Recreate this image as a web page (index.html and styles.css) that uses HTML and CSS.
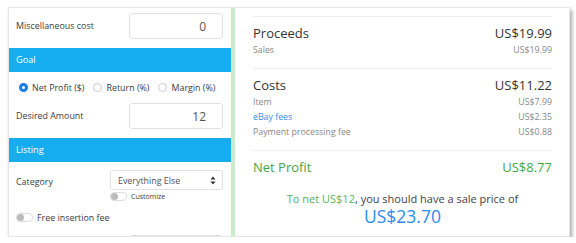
FILE: index.html
```html
<!DOCTYPE html>
<html lang="en">
<head>
    <meta charset="UTF-8">
    <meta name="viewport" content="width=device-width, initial-scale=1.0">
    <title>eBay Fee Calculator</title>
    <link rel="stylesheet" href="styles.css">
</head>
<body>
    <div class="calculator">
        <!-- inputs -->
        <div class="inputs">
            <div class="field">
                <label>Miscellaneous cost</label>
                <input class="num" type="text" value="0">
            </div>

            <div class="section-head">Goal</div>
            <div class="radios">
                <span class="radio checked"></span><span class="radio-label">Net Profit ($)</span>
                <span class="radio"></span><span class="radio-label">Return (%)</span>
                <span class="radio"></span><span class="radio-label">Margin (%)</span>
            </div>
            <div class="field">
                <label>Desired Amount</label>
                <input class="num" type="text" value="12">
            </div>

            <div class="section-head">Listing</div>
            <div class="field field-select">
                <label>Category</label>
                <div class="select-wrap">
                    <div class="select">
                        <span>Everything Else</span>
                        <svg width="6" height="9" viewBox="0 0 6 9">
                            <path d="M3 0.5 L5.5 3.5 H0.5 Z M3 8.5 L5.5 5.5 H0.5 Z" fill="#333"/>
                        </svg>
                    </div>
                    <div class="switch-row small">
                        <span class="switch"></span><span>Customize</span>
                    </div>
                </div>
            </div>
            <div class="switch-row">
                <span class="switch"></span><span>Free insertion fee</span>
            </div>
            <div class="field">
                <label></label>
                <input class="num" type="text" value="">
            </div>
        </div>

        <div class="split"></div>

        <!-- results -->
        <div class="results">
            <div class="block">
                <div class="line big"><span>Proceeds</span><span>US$19.99</span></div>
                <div class="line"><span>Sales</span><span>US$19.99</span></div>
            </div>
            <div class="block">
                <div class="line big"><span>Costs</span><span>US$11.22</span></div>
                <div class="line"><span>Item</span><span>US$7.99</span></div>
                <div class="line"><a href="#">eBay fees</a><span>US$2.35</span></div>
                <div class="line"><span>Payment processing fee</span><span>US$0.88</span></div>
            </div>
            <div class="block">
                <div class="line big profit"><span>Net Profit</span><span>US$8.77</span></div>
                <p class="target"><span class="green">To net US$12</span>, you should have a sale price of</p>
                <p class="price">US$23.70</p>
            </div>
        </div>
    </div>
</body>
</html>
```

FILE: styles.css
```css
body {
    margin: 0;
    font-family: "Open Sans", Arial, sans-serif;
    background-color: #fff;
    color: #444;
}

.calculator {
    display: grid;
    grid-template-columns: 222px 4px 1fr;
    margin: 7px 6px 0 8px;
    height: 230px;
    overflow: hidden;
    background: #fff;
    border: 1px solid #e6e6e6;
    box-shadow: 2px 3px 4px rgba(0, 0, 0, 0.35);
    box-sizing: border-box;
}

/* left column */
.inputs {
    font-size: 8.9px;
    color: #3c3c3c;
}

.field {
    display: flex;
    justify-content: space-between;
    align-items: flex-start;
    padding: 5px 8px 9px 7px;
}

.field label {
    padding-top: 6px;
}

.num {
    width: 94px;
    height: 26px;
    box-sizing: border-box;
    border: 1px solid #e2e2e2;
    border-radius: 3px;
    padding: 0 16px;
    text-align: right;
    font-family: inherit;
    font-size: 12px;
    color: #555;
}

.section-head {
    background-color: #16adef;
    color: #fff;
    font-size: 9.2px;
    height: 24px;
    line-height: 24px;
    padding-left: 7px;
}

.radios {
    display: flex;
    align-items: center;
    height: 22px;
    padding: 4px 0 0 10px;
    white-space: nowrap;
}

.radio {
    flex: none;
    width: 9px;
    height: 9px;
    border: 1px solid #ccc;
    border-radius: 50%;
    box-sizing: border-box;
    margin-right: 4px;
}

.radio.checked {
    border: 3px solid #1a7ee6;
    background: #fff;
}

.radio-label {
    margin-right: 9px;
}

.field-select {
    padding-top: 8px;
    padding-bottom: 10px;
}

.field-select label {
    padding-top: 5px;
}

.select-wrap {
    width: 113px;
}

.select {
    display: flex;
    justify-content: space-between;
    align-items: center;
    height: 20px;
    border: 1px solid #e2e2e2;
    border-radius: 3px;
    padding: 0 6px 0 7px;
    box-sizing: border-box;
    color: #555;
}

.switch-row {
    display: flex;
    align-items: center;
    gap: 4px;
    padding: 0 0 6px 7px;
}

.switch-row.small {
    font-size: 7px;
    padding: 2px 0 0 0;
}

.switch {
    width: 15px;
    height: 7px;
    border: 1px solid #ddd;
    border-radius: 4px;
    position: relative;
}

.switch::before {
    content: "";
    position: absolute;
    left: 0;
    top: 0;
    width: 7px;
    height: 7px;
    border-radius: 50%;
    background: #bbb;
}

/* divider */
.split {
    background-color: #c9ecc9;
}

/* right column */
.results {
    padding: 8px 17px 0 18px;
    font-size: 8.8px;
    color: #888;
}

.block {
    border-top: 1px solid #eee;
    padding: 7px 0 10px;
}

.line {
    display: flex;
    justify-content: space-between;
    line-height: 15px;
}

.line.big {
    font-size: 13px;
    line-height: 19px;
    color: #333;
}

.line a {
    color: #3a8ee9;
    text-decoration: none;
}

.line.profit {
    color: #3fa845;
}

.target {
    margin: 14px 0 0;
    text-align: center;
    font-size: 11px;
    line-height: 16px;
    color: #444;
}

.green {
    color: #56b45a;
}

.price {
    margin: -2px 0 0;
    text-align: center;
    font-size: 17.5px;
    line-height: 22px;
    color: #2b8cf2;
}
```
